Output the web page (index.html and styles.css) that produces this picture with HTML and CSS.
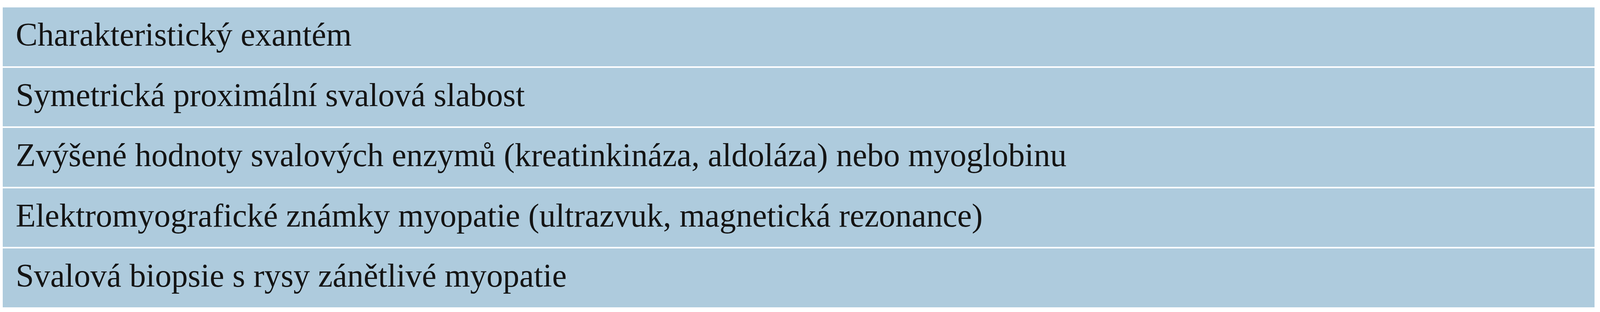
FILE: index.html
```html
<!DOCTYPE html>
<html lang="cs">
<head>
<meta charset="utf-8">
<title>Kritéria</title>
<link rel="stylesheet" href="styles.css">
</head>
<body>
<div class="criteria">
  <div class="row">Charakteristický exantém</div>
  <div class="row">Symetrická proximální svalová slabost</div>
  <div class="row">Zvýšené hodnoty svalových enzymů (kreatinkináza, aldoláza) nebo myoglobinu</div>
  <div class="row">Elektromyografické známky myopatie (ultrazvuk, magnetická rezonance)</div>
  <div class="row">Svalová biopsie s rysy zánětlivé myopatie</div>
</div>
</body>
</html>
```
FILE: styles.css
```css
html, body {
  margin: 0;
  padding: 0;
  background: #ffffff;
  overflow: hidden;
}
body {
  padding: 19px 0 0 0.18vw;
}
.criteria {
  width: 99.48vw;
  display: flex;
  flex-direction: column;
  gap: 4px;
}
.row {
  box-sizing: border-box;
  height: 150.6px;
  padding: 0 0 10px 0.8vw;
  background: #aecbdd;
  color: #141414;
  font-family: "Liberation Serif", "Times New Roman", serif;
  font-size: 2.05vw;
  line-height: 140px;
  white-space: nowrap;
}
```
